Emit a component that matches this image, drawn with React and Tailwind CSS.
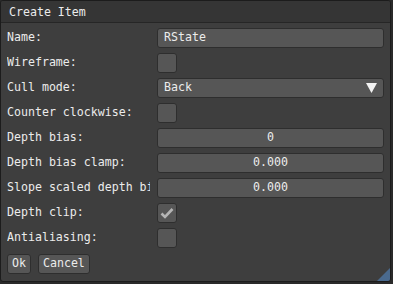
import React from 'react'

const font = { fontFamily: '"DejaVu Sans Mono", "Liberation Mono", monospace' }

function Row({ label, children }) {
  return (
    <div className="flex h-[20px] items-center">
      <div className="mr-[7px] w-[143px] overflow-hidden whitespace-nowrap">{label}</div>
      {children}
    </div>
  )
}

function Checkbox({ checked }) {
  return (
    <div className="flex h-[20px] w-[20px] items-center justify-center rounded-[3px] border border-[#2e2e2e] bg-[#565656]">
      {checked && (
        <svg width="14" height="12" viewBox="0 0 14 12">
          <path d="M1.5 6.5 L5 10 L12.5 2" fill="none" stroke="#b4b4b4" strokeWidth="2.6" />
        </svg>
      )}
    </div>
  )
}

function Field({ children, center }) {
  return (
    <div
      className={`flex h-[20px] w-[227px] items-center rounded-[3px] border border-[#2e2e2e] bg-[#565656] px-[6px] ${
        center ? 'justify-center' : ''
      }`}
    >
      {children}
    </div>
  )
}

export default function App() {
  return (
    <div className="h-[284px] w-[393px] bg-[#2a2a2a] text-[11.6px] text-[#ececec]" style={font}>
      <div className="flex h-[282px] w-[391px] flex-col overflow-hidden rounded-[3px] border border-[#1c1c1c] bg-[#3e3e3e]">
        <div className="flex h-[22px] items-center border-b border-[#262626] bg-[#353535] px-[8px] pt-[2px]">
          Create Item
        </div>
        <div className="relative flex flex-1 flex-col gap-[5px] px-[6px] pt-[5px]">
          <Row label="Name:">
            <Field>RState</Field>
          </Row>
          <Row label="Wireframe:">
            <Checkbox />
          </Row>
          <Row label="Cull mode:">
            <Field>
              <span className="flex-1">Back</span>
              <svg width="11" height="10" viewBox="0 0 11 10">
                <path d="M0 0 H11 L5.5 10 Z" fill="#f2f2f2" />
              </svg>
            </Field>
          </Row>
          <Row label="Counter clockwise:">
            <Checkbox />
          </Row>
          <Row label="Depth bias:">
            <Field center>0</Field>
          </Row>
          <Row label="Depth bias clamp:">
            <Field center>0.000</Field>
          </Row>
          <Row label="Slope scaled depth bias:">
            <Field center>0.000</Field>
          </Row>
          <Row label="Depth clip:">
            <Checkbox checked />
          </Row>
          <Row label="Antialiasing:">
            <Checkbox />
          </Row>
          <div className="mt-[1px] flex gap-[7px]">
            <button className="h-[20px] rounded-[3px] border border-[#2e2e2e] bg-[#565656] px-[4px]">Ok</button>
            <button className="h-[20px] rounded-[3px] border border-[#2e2e2e] bg-[#565656] px-[4px]">Cancel</button>
          </div>
          <svg className="absolute bottom-0 right-0" width="13" height="13" viewBox="0 0 13 13">
            <path d="M13 0 V13 H0 Z" fill="#4a6a8e" />
          </svg>
        </div>
      </div>
    </div>
  )
}
